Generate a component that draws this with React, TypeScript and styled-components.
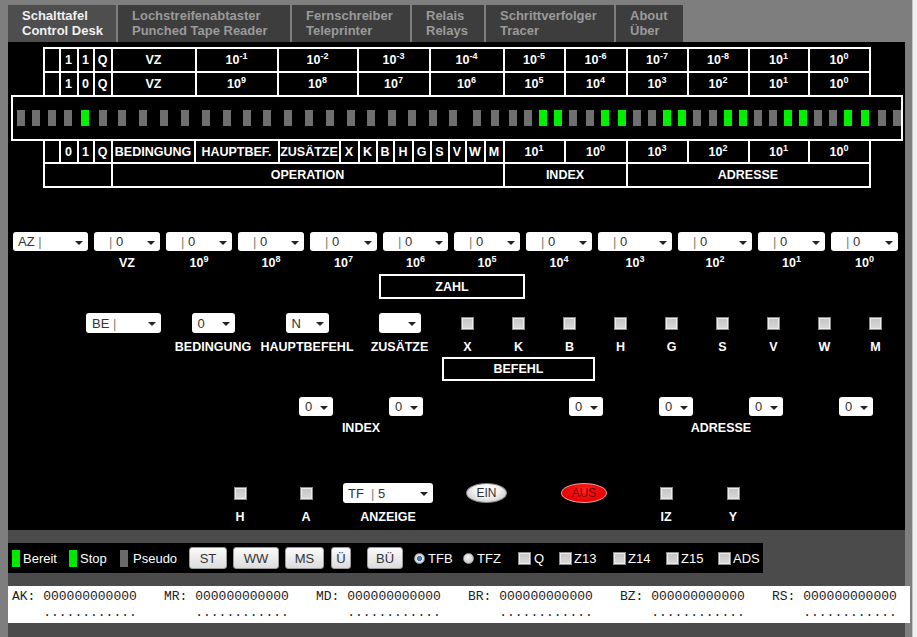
import React from 'react';
import styled, { createGlobalStyle } from 'styled-components';

// Control desk of the tube computer emulator: tab strip, register tables with
// the lamp bar, the entry panel of selects and switches, then the status dock.

const GlobalStyle = createGlobalStyle`
  html, body { margin: 0; padding: 0; }
  body {
    background: #7e7e7e;
    font-family: 'Liberation Sans', Arial, sans-serif;
  }
`;

const Shell = styled.div`
  display: flex;
  width: 917px;
  height: 637px;
  overflow: hidden;
  background: #7e7e7e;
`;

const Page = styled.div`
  width: 897px;
  height: 637px;
  margin-left: 8px;
  display: flex;
  flex-direction: column;
`;

const Track = styled.div`
  margin-left: 7px;
  width: 4px;
  border-left: 1px solid #c4c4c4;
  background: #efefef;
`;

const TabBar = styled.div`
  flex: none;
  display: flex;
  gap: 2px;
  padding-top: 5px;
`;

const Tab = styled.div<{ $w: number; $active?: boolean }>`
  box-sizing: border-box;
  width: ${p => p.$w}px;
  height: 37px;
  padding: 3px 0 0 14px;
  background: ${p => (p.$active ? '#4e4e4e' : '#3d3d3d')};
  color: ${p => (p.$active ? '#f0f0f0' : '#9a9a9a')};
  font-weight: bold;
  font-size: 13px;
  line-height: 15px;
  white-space: nowrap;
`;

const Panel = styled.div`
  flex: none;
  box-sizing: border-box;
  height: 488px;
  padding-top: 5px;
  background: #000;
  color: #fff;
`;

const RegGrid = styled.div<{ $cols: string; $rows: string; $edge: 'top' | 'bottom' }>`
  display: grid;
  grid-template-columns: ${p => p.$cols};
  grid-template-rows: ${p => p.$rows};
  gap: 2px;
  padding: ${p => (p.$edge === 'top' ? '2px 2px 0' : '0 2px 2px')};
  width: max-content;
  margin: 0 auto;
  background: #fff;
`;

const RegCell = styled.div<{ $span?: number }>`
  grid-column: span ${p => p.$span ?? 1};
  display: flex;
  align-items: center;
  justify-content: center;
  background: #000;
  color: #fff;
  font-weight: bold;
  font-size: 12.5px;
  white-space: nowrap;
`;

const PowText = styled.span`
  white-space: nowrap;
`;

const Sup = styled.sup`
  font-size: 9px;
  line-height: 0;
  vertical-align: 5px;
`;

const LampBar = styled.div`
  box-sizing: border-box;
  width: 892px;
  height: 46px;
  margin: 0 auto;
  border: 2px solid #fff;
  display: flex;
  align-items: center;
`;

const Lamp = styled.span<{ $on: boolean; $ml: number }>`
  flex: none;
  width: 8px;
  height: 16px;
  margin-left: ${p => p.$ml}px;
  background: ${p => (p.$on ? '#00f000' : '#6f6f6f')};
`;

const FieldGrid = styled.div<{ $cols: string; $ml: number; $mt: number; $gap: number; $colGap?: number }>`
  display: grid;
  grid-template-columns: ${p => p.$cols};
  row-gap: ${p => p.$gap}px;
  column-gap: ${p => p.$colGap ?? 0}px;
  margin: ${p => p.$mt}px 0 0 ${p => p.$ml}px;
`;

const Slot = styled.div<{ $h: number }>`
  height: ${p => p.$h}px;
  display: flex;
  align-items: center;
  justify-content: center;
`;

const Caption = styled.div<{ $span?: number }>`
  grid-column: span ${p => p.$span ?? 1};
  height: 16px;
  line-height: 16px;
  text-align: center;
  font-weight: bold;
  font-size: 12.5px;
  white-space: nowrap;
`;

const SelectBox = styled.div<{ $w: number; $h: number; $pad: number }>`
  box-sizing: border-box;
  width: ${p => p.$w}px;
  height: ${p => p.$h}px;
  padding-left: ${p => p.$pad}px;
  display: flex;
  align-items: center;
  background: #fff;
  border-radius: 3px;
  color: #333;
  font-size: 13px;
  white-space: pre;
`;

const Caret = styled.span`
  margin: 2px 5px 0 auto;
  border-left: 4px solid transparent;
  border-right: 4px solid transparent;
  border-top: 4px solid #222;
`;

const Pipe = styled.span`
  color: #808080;
`;

const Check = styled.span`
  box-sizing: border-box;
  display: inline-block;
  flex: none;
  width: 13px;
  height: 13px;
  border: 1px solid #8a8a8a;
  background: linear-gradient(#c4c4c4, #dadada);
  box-shadow: inset 0 0 0 1px #ececec;
`;

const TitleBox = styled.div<{ $w: number; $h: number; $ml: number; $mt: number }>`
  box-sizing: border-box;
  width: ${p => p.$w}px;
  height: ${p => p.$h}px;
  margin: ${p => p.$mt}px 0 0 ${p => p.$ml}px;
  border: 2px solid #fff;
  display: flex;
  align-items: center;
  justify-content: center;
  font-weight: bold;
  font-size: 12.5px;
`;

const Pill = styled.div<{ $w: number; $red?: boolean }>`
  box-sizing: border-box;
  width: ${p => p.$w}px;
  height: 20px;
  border-radius: 50%;
  display: flex;
  align-items: center;
  justify-content: center;
  font-size: 12px;
  color: ${p => (p.$red ? '#6a0000' : '#333')};
  border: 1px solid ${p => (p.$red ? '#f39a9a' : '#8a8a8a')};
  background: ${p =>
    p.$red
      ? 'radial-gradient(ellipse at 50% 35%, #ff2020 0%, #e80000 70%, #c80000 100%)'
      : 'radial-gradient(ellipse at 50% 30%, #ffffff 0%, #f2f2f2 45%, #bcbcbc 100%)'};
`;

const Dock = styled.div`
  flex: 1 0 auto;
  background: #4b4b4b;
  padding-top: 13px;
`;

const ControlBar = styled.div`
  box-sizing: border-box;
  width: 755px;
  height: 30px;
  padding-left: 4px;
  display: flex;
  align-items: center;
  background: #000;
  color: #fff;
  font-size: 13px;
`;

const Group = styled.div<{ $w: number; $gap: number; $ml?: number }>`
  flex: none;
  width: ${p => p.$w}px;
  margin-left: ${p => p.$ml ?? 0}px;
  display: flex;
  align-items: center;
  gap: ${p => p.$gap}px;
  white-space: nowrap;
`;

const BarLamp = styled.span<{ $on: boolean }>`
  flex: none;
  width: 8px;
  height: 17px;
  background: ${p => (p.$on ? '#00e800' : '#6a6a6a')};
`;

const Key = styled.button<{ $w: number; $ml: number }>`
  flex: none;
  box-sizing: border-box;
  width: ${p => p.$w}px;
  height: 22px;
  margin: 0 0 0 ${p => p.$ml}px;
  padding: 0;
  border: 1px solid #9c9c9c;
  border-radius: 3px;
  background: linear-gradient(#fbfbfb, #dcdcdc);
  color: #333;
  font-family: 'Liberation Sans', Arial, sans-serif;
  font-size: 13px;
`;

const Radio = styled.span<{ $on?: boolean }>`
  flex: none;
  box-sizing: border-box;
  width: 11px;
  height: 11px;
  border-radius: 50%;
  border: 1px solid #9a9a9a;
  background: ${p =>
    p.$on
      ? 'radial-gradient(circle, #5d8fc8 0%, #3b6ea6 35%, #e4e4e4 45%, #cfcfcf 100%)'
      : 'radial-gradient(circle at 40% 35%, #f0f0f0, #c4c4c4)'};
`;

const StatusPanel = styled.div`
  box-sizing: border-box;
  width: 902px;
  margin-top: 13px;
  padding: 3px 0 2px 4px;
  display: grid;
  grid-template-columns: repeat(6, 152px);
  background: #fff;
  color: #222;
  font-family: 'Liberation Mono', 'Courier New', monospace;
  font-size: 13px;
  line-height: 16px;
  white-space: pre;
`;

const Pow = ({ e }: { e: number | string }) => (
  <PowText>
    10<Sup>{e}</Sup>
  </PowText>
);

const Select = ({ w, h = 19, pad = 6, children }: { w: number; h?: number; pad?: number; children?: React.ReactNode }) => (
  <SelectBox $w={w} $h={h} $pad={pad}>
    {children}
    <Caret />
  </SelectBox>
);

const LAMP_X = [
  16, 31, 47, 63, 80, 98, 117, 138, 159, 180, 201, 222, 242, 262, 283, 304, 325, 346, 366, 387, 407, 428, 448,
  472, 490, 508, 523, 538, 553, 568, 585, 600, 617, 632, 647, 662, 677, 692, 708, 723, 738, 753, 768, 783, 798,
  813, 828, 843, 860, 877, 892,
];
const LAMP_ON = new Set([80, 538, 553, 600, 617, 662, 677, 723, 738, 783, 798, 843, 860]);

const TOP_COLS = '14px 16px 14px 16px 82px 80px 78px 70px 72px 59px 60px 59px 59px 58px 59px';
const BOTTOM_COLS =
  '14px 16px 14px 16px 81px 82px 59px 17px 16px 15px 17px 16px 16px 15px 17px 17px 59px 60px 59px 59px 58px 59px';

const topRow1: React.ReactNode[] = ['', '1', '1', 'Q', 'VZ', ...[-1, -2, -3, -4, -5, -6, -7, -8, 1, 0].map(e => <Pow e={e} />)];
const topRow2: React.ReactNode[] = ['', '1', '0', 'Q', 'VZ', ...[9, 8, 7, 6, 5, 4, 3, 2, 1, 0].map(e => <Pow e={e} />)];
const opRow: React.ReactNode[] = [
  '', '0', '1', 'Q', 'BEDINGUNG', 'HAUPTBEF.', 'ZUSÄTZE', 'X', 'K', 'B', 'H', 'G', 'S', 'V', 'W', 'M',
  ...[1, 0, 3, 2, 1, 0].map(e => <Pow e={e} />),
];

const DIGIT_W = [66, 66, 66, 67, 65, 66, 66, 74, 74, 67, 67];
const DIGIT_E = [null, 9, 8, 7, 6, 5, 4, 3, 2, 1, 0];
const FLAGS = ['X', 'K', 'B', 'H', 'G', 'S', 'V', 'W', 'M'];

const Zero = () => (
  <>
    <Pipe>|</Pipe> 0
  </>
);

const Registers = ['AK', 'MR', 'MD', 'BR', 'BZ', 'RS'];

export default function App() {
  return (
    <>
      <GlobalStyle />
      <Shell>
        <Page>
          <TabBar>
            <Tab $w={108} $active>Schalttafel<br />Control Desk</Tab>
            <Tab $w={172}>Lochstreifenabtaster<br />Punched Tape Reader</Tab>
            <Tab $w={118}>Fernschreiber<br />Teleprinter</Tab>
            <Tab $w={72}>Relais<br />Relays</Tab>
            <Tab $w={128}>Schrittverfolger<br />Tracer</Tab>
            <Tab $w={67}>About<br />Über</Tab>
          </TabBar>

          <Panel>
            <RegGrid $cols={TOP_COLS} $rows="22px 22px" $edge="top">
              {[...topRow1, ...topRow2].map((c, i) => (
                <RegCell key={i}>{c}</RegCell>
              ))}
            </RegGrid>

            <LampBar>
              {LAMP_X.map((x, i) => (
                <Lamp key={x} $on={LAMP_ON.has(x)} $ml={i === 0 ? x - 12 : x - LAMP_X[i - 1] - 8} />
              ))}
            </LampBar>

            <RegGrid $cols={BOTTOM_COLS} $rows="21px 22px" $edge="bottom">
              {opRow.map((c, i) => (
                <RegCell key={i}>{c}</RegCell>
              ))}
              <RegCell $span={4} />
              <RegCell $span={12}>OPERATION</RegCell>
              <RegCell $span={2}>INDEX</RegCell>
              <RegCell $span={4}>ADRESSE</RegCell>
            </RegGrid>

            <FieldGrid $cols={`75px ${DIGIT_W.map(w => `${w}px`).join(' ')}`} $ml={5} $mt={44} $gap={4} $colGap={6}>
              <Slot $h={19}>
                <Select w={75} pad={5}>AZ <Pipe>|</Pipe></Select>
              </Slot>
              {DIGIT_W.map((w, i) => (
                <Slot key={i} $h={19}>
                  <Select w={w} pad={15}><Zero /></Select>
                </Slot>
              ))}
              <Caption />
              {DIGIT_E.map((e, i) => (
                <Caption key={i}>{e === null ? 'VZ' : <Pow e={e} />}</Caption>
              ))}
            </FieldGrid>

            <TitleBox $w={146} $h={25} $ml={371} $mt={3}>ZAHL</TitleBox>

            <FieldGrid $cols="91px 88px 100px 85px repeat(9, 51px)" $ml={70} $mt={14} $gap={6}>
              <Slot $h={20}><Select w={75} h={20}>BE <Pipe>|</Pipe></Select></Slot>
              <Slot $h={20}><Select w={43} h={20}>0</Select></Slot>
              <Slot $h={20}><Select w={43} h={20}>N</Select></Slot>
              <Slot $h={20}><Select w={42} h={20} /></Slot>
              {FLAGS.map(f => (
                <Slot key={f} $h={20}><Check /></Slot>
              ))}
              <Caption />
              <Caption>BEDINGUNG</Caption>
              <Caption>HAUPTBEFEHL</Caption>
              <Caption>ZUSÄTZE</Caption>
              {FLAGS.map(f => (
                <Caption key={f}>{f}</Caption>
              ))}
            </FieldGrid>

            <TitleBox $w={153} $h={24} $ml={434} $mt={2}>BEFEHL</TitleBox>

            <FieldGrid $cols="repeat(7, 90px)" $ml={263} $mt={16} $gap={4}>
              {[true, true, false, true, true, true, true].map((on, i) => (
                <Slot key={i} $h={19}>{on && <Select w={34}>0</Select>}</Slot>
              ))}
              <Caption $span={2}>INDEX</Caption>
              <Caption />
              <Caption $span={4}>ADRESSE</Caption>
            </FieldGrid>

            <FieldGrid $cols="66px 66px 98px 99px 96px 68px 66px" $ml={199} $mt={47} $gap={6}>
              <Slot $h={20}><Check /></Slot>
              <Slot $h={20}><Check /></Slot>
              <Slot $h={20}>
                <Select w={90} h={20} pad={5}>TF  <Pipe>|</Pipe> 5</Select>
              </Slot>
              <Slot $h={20}><Pill $w={41}>EIN</Pill></Slot>
              <Slot $h={20}><Pill $w={46} $red>AUS</Pill></Slot>
              <Slot $h={20}><Check /></Slot>
              <Slot $h={20}><Check /></Slot>
              <Caption>H</Caption>
              <Caption>A</Caption>
              <Caption>ANZEIGE</Caption>
              <Caption />
              <Caption />
              <Caption>IZ</Caption>
              <Caption>Y</Caption>
            </FieldGrid>
          </Panel>

          <Dock>
            <ControlBar>
              <Group $w={57} $gap={3}><BarLamp $on />Bereit</Group>
              <Group $w={51} $gap={3}><BarLamp $on />Stop</Group>
              <Group $w={69} $gap={5}><BarLamp $on={false} />Pseudo</Group>
              <Key $w={38} $ml={0}>ST</Key>
              <Key $w={46} $ml={6}>WW</Key>
              <Key $w={39} $ml={6}>MS</Key>
              <Key $w={20} $ml={7}>Ü</Key>
              <Key $w={36} $ml={16}>BÜ</Key>
              <Group $w={49} $gap={3} $ml={11}><Radio $on />TFB</Group>
              <Group $w={55} $gap={3}><Radio />TFZ</Group>
              <Group $w={41} $gap={3}><Check />Q</Group>
              <Group $w={54} $gap={2}><Check />Z13</Group>
              <Group $w={53} $gap={2}><Check />Z14</Group>
              <Group $w={52} $gap={2}><Check />Z15</Group>
              <Group $w={45} $gap={2}><Check />ADS</Group>
            </ControlBar>

            <StatusPanel>
              {Registers.map(r => (
                <div key={r}>
                  {`${r}: 000000000000`}
                  <br />
                  {'    ............'}
                </div>
              ))}
            </StatusPanel>
          </Dock>
        </Page>
        <Track />
      </Shell>
    </>
  );
}
